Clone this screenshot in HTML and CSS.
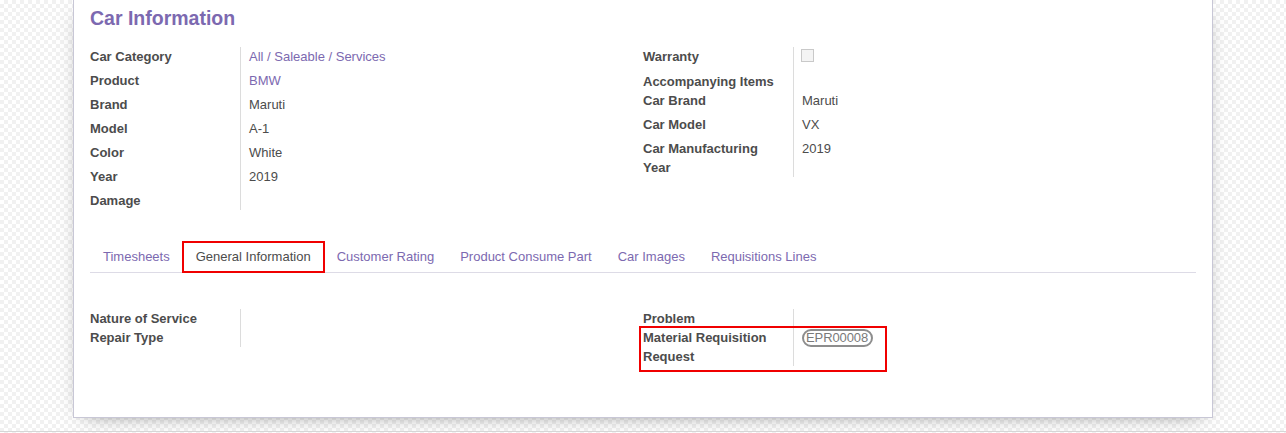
FILE: index.html
```html
<!DOCTYPE html>
<html>
<head>
<meta charset="utf-8">
<link rel="stylesheet" href="styles.css">
</head>
<body>
<div class="page">
  <div class="sheet">
    <h1 class="title">Car Information</h1>
    <div class="groups">
      <div class="group">
        <div class="row"><div class="lbl">Car Category</div><div class="val"><a class="link">All / Saleable / Services</a></div></div>
        <div class="row"><div class="lbl">Product</div><div class="val"><a class="link">BMW</a></div></div>
        <div class="row"><div class="lbl">Brand</div><div class="val">Maruti</div></div>
        <div class="row"><div class="lbl">Model</div><div class="val">A-1</div></div>
        <div class="row"><div class="lbl">Color</div><div class="val">White</div></div>
        <div class="row"><div class="lbl">Year</div><div class="val">2019</div></div>
        <div class="row"><div class="lbl">Damage</div><div class="val empty"></div></div>
      </div>
      <div class="group">
        <div class="row"><div class="lbl">Warranty</div><div class="val check-cell"><span class="checkbox"></span></div></div>
        <div class="row"><div class="lbl">Accompanying Items</div><div class="val empty"></div></div>
        <div class="row"><div class="lbl">Car Brand</div><div class="val">Maruti</div></div>
        <div class="row"><div class="lbl">Car Model</div><div class="val">VX</div></div>
        <div class="row"><div class="lbl">Car Manufacturing Year</div><div class="val">2019</div></div>
      </div>
    </div>

    <div class="notebook">
      <ul class="tabs">
        <li class="tab">Timesheets</li>
        <li class="tab active">General Information</li>
        <li class="tab">Customer Rating</li>
        <li class="tab">Product Consume Part</li>
        <li class="tab">Car Images</li>
        <li class="tab">Requisitions Lines</li>
      </ul>
      <div class="pane">
        <div class="groups">
          <div class="group">
            <div class="row"><div class="lbl">Nature of Service</div><div class="val empty"></div></div>
            <div class="row"><div class="lbl">Repair Type</div><div class="val empty"></div></div>
          </div>
          <div class="group">
            <div class="row"><div class="lbl">Problem</div><div class="val empty"></div></div>
            <div class="row highlight"><div class="lbl">Material Requisition Request</div><div class="val empty"><span class="badge">EPR00008</span></div></div>
          </div>
        </div>
      </div>
    </div>
  </div>
</div>
</body>
</html>
```
FILE: styles.css
```css
*, *::before, *::after { box-sizing: border-box; }

html, body {
  margin: 0;
  padding: 0;
}

body {
  font-family: "Liberation Sans", Arial, sans-serif;
  font-size: 13px;
  color: #4c4c4c;
  background-color: #fff;
  background-image: conic-gradient(#f1f1f1 25%, #ffffff 0 50%, #f1f1f1 0 75%, #ffffff 0);
  background-size: 8px 8px;
}

.page {
  height: 432px;
  border-bottom: 1px solid #d6d6d6;
  overflow: hidden;
}

.sheet {
  width: 1140px;
  margin: 0 auto;
  background: #fff;
  border: 1px solid #c8c7d6;
  border-top: none;
  box-shadow: 0 5px 20px -12px rgba(0, 0, 0, 0.7);
  padding: 6px 16px 51px;
}

.title {
  margin: 0;
  font-size: 19.5px;
  line-height: 24px;
  font-weight: bold;
  color: #7c69b0;
}

.groups {
  display: flex;
  margin-top: 17px;
}

.group {
  flex: 1 1 0;
  display: flex;
  flex-direction: column;
}

.row {
  display: grid;
  grid-template-columns: 151px 1fr;
  position: relative;
}

.lbl {
  font-weight: bold;
  line-height: 19px;
  border-right: 1px solid #dcdcdc;
  padding-right: 10px;
}

.val {
  line-height: 19px;
  padding-left: 8px;
  padding-bottom: 5px;
}

.val.empty { padding-bottom: 0; }

.check-cell {
  padding-top: 2px;
  padding-left: 7px;
  padding-bottom: 10px;
}

.checkbox {
  display: block;
  width: 13px;
  height: 13px;
  border: 1px solid #c9c9c9;
  background: #f4f4f4;
}

.link {
  color: #7c69b0;
  text-decoration: none;
}

.notebook {
  margin-top: 31px;
}

.tabs {
  list-style: none;
  margin: 0;
  padding: 0;
  display: flex;
  border-bottom: 1px solid #dddbe6;
}

.tab {
  color: #7c69b0;
  line-height: 19px;
  padding: 5px 12px;
  border: 1px solid transparent;
  margin-bottom: -1px;
  white-space: nowrap;
}

.tab.active {
  color: #4c4c4c;
  border: 2px solid #f00000;
  padding: 4px 12px 5px;
  margin-left: -1px;
  margin-right: -1px;
  background: #fff;
}

.pane {
  padding-top: 36px;
}

.pane .groups { margin-top: 0; }

.badge {
  display: inline-block;
  border: 2px solid #8d8d8d;
  border-radius: 10px;
  color: #7a7a7a;
  font-size: 13px;
  line-height: 14px;
  padding: 0 3px 0 2px;
  letter-spacing: -0.1px;
}

.highlight::after {
  content: "";
  position: absolute;
  left: -4px;
  top: -2px;
  width: 248px;
  height: 46px;
  border: 2px solid #f00000;
  pointer-events: none;
}
```
